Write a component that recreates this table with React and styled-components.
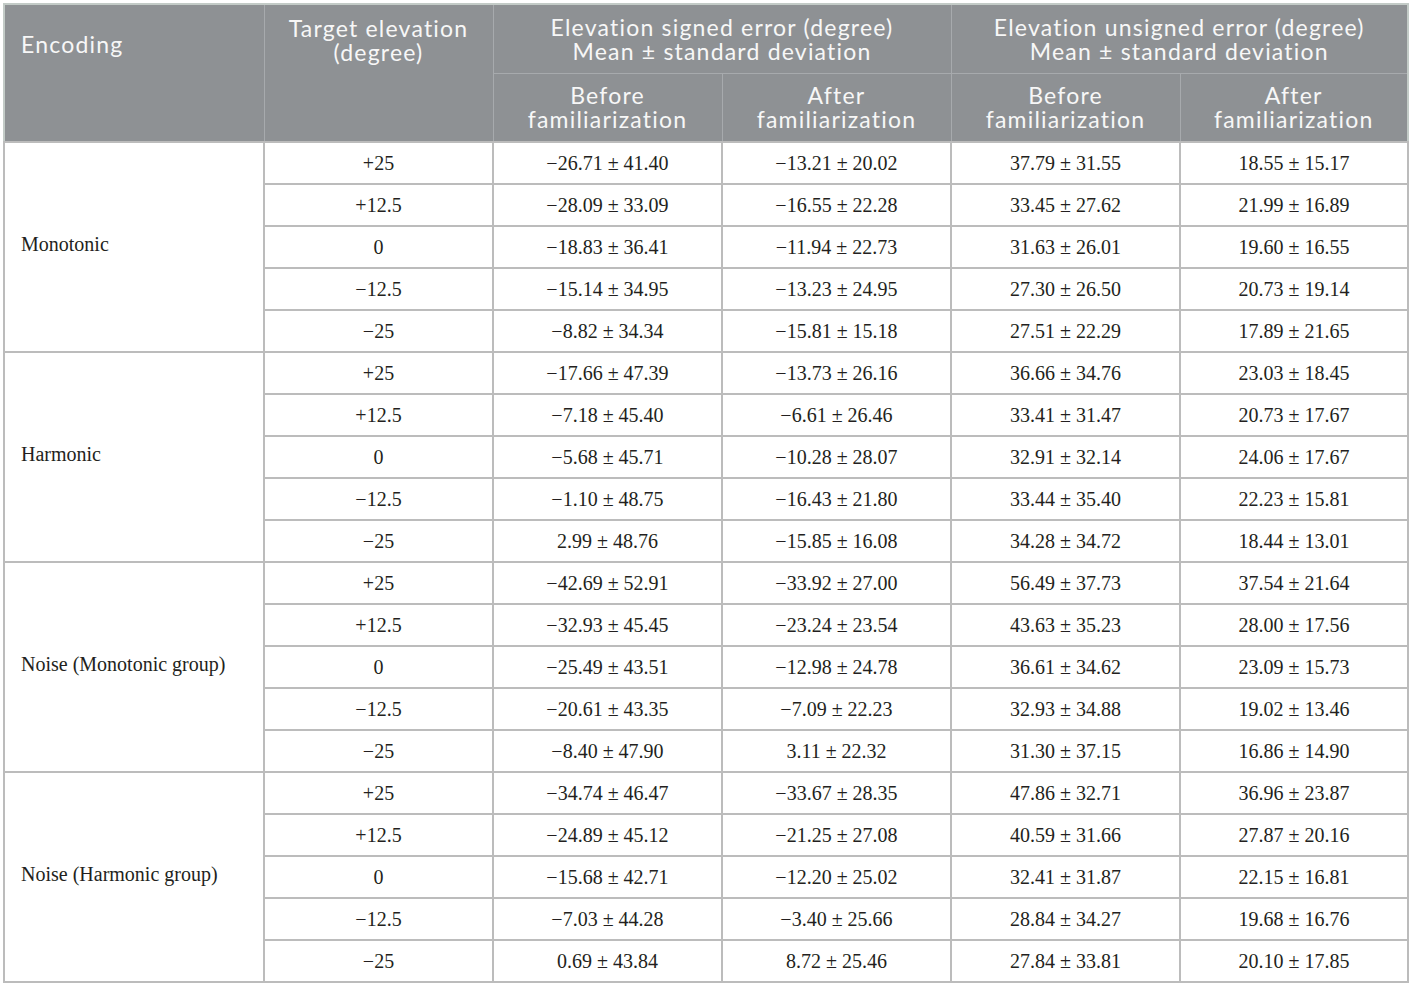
import React from "react";
import styled, { createGlobalStyle } from "styled-components";

const groups = [
  {
    name: "Monotonic",
    rows: [
      ["+25", "−26.71 ± 41.40", "−13.21 ± 20.02", "37.79 ± 31.55", "18.55 ± 15.17"],
      ["+12.5", "−28.09 ± 33.09", "−16.55 ± 22.28", "33.45 ± 27.62", "21.99 ± 16.89"],
      ["0", "−18.83 ± 36.41", "−11.94 ± 22.73", "31.63 ± 26.01", "19.60 ± 16.55"],
      ["−12.5", "−15.14 ± 34.95", "−13.23 ± 24.95", "27.30 ± 26.50", "20.73 ± 19.14"],
      ["−25", "−8.82 ± 34.34", "−15.81 ± 15.18", "27.51 ± 22.29", "17.89 ± 21.65"],
    ],
  },
  {
    name: "Harmonic",
    rows: [
      ["+25", "−17.66 ± 47.39", "−13.73 ± 26.16", "36.66 ± 34.76", "23.03 ± 18.45"],
      ["+12.5", "−7.18 ± 45.40", "−6.61 ± 26.46", "33.41 ± 31.47", "20.73 ± 17.67"],
      ["0", "−5.68 ± 45.71", "−10.28 ± 28.07", "32.91 ± 32.14", "24.06 ± 17.67"],
      ["−12.5", "−1.10 ± 48.75", "−16.43 ± 21.80", "33.44 ± 35.40", "22.23 ± 15.81"],
      ["−25", "2.99 ± 48.76", "−15.85 ± 16.08", "34.28 ± 34.72", "18.44 ± 13.01"],
    ],
  },
  {
    name: "Noise (Monotonic group)",
    rows: [
      ["+25", "−42.69 ± 52.91", "−33.92 ± 27.00", "56.49 ± 37.73", "37.54 ± 21.64"],
      ["+12.5", "−32.93 ± 45.45", "−23.24 ± 23.54", "43.63 ± 35.23", "28.00 ± 17.56"],
      ["0", "−25.49 ± 43.51", "−12.98 ± 24.78", "36.61 ± 34.62", "23.09 ± 15.73"],
      ["−12.5", "−20.61 ± 43.35", "−7.09 ± 22.23", "32.93 ± 34.88", "19.02 ± 13.46"],
      ["−25", "−8.40 ± 47.90", "3.11 ± 22.32", "31.30 ± 37.15", "16.86 ± 14.90"],
    ],
  },
  {
    name: "Noise (Harmonic group)",
    rows: [
      ["+25", "−34.74 ± 46.47", "−33.67 ± 28.35", "47.86 ± 32.71", "36.96 ± 23.87"],
      ["+12.5", "−24.89 ± 45.12", "−21.25 ± 27.08", "40.59 ± 31.66", "27.87 ± 20.16"],
      ["0", "−15.68 ± 42.71", "−12.20 ± 25.02", "32.41 ± 31.87", "22.15 ± 16.81"],
      ["−12.5", "−7.03 ± 44.28", "−3.40 ± 25.66", "28.84 ± 34.27", "19.68 ± 16.76"],
      ["−25", "0.69 ± 43.84", "8.72 ± 25.46", "27.84 ± 33.81", "20.10 ± 17.85"],
    ],
  },
];

const App = () => {
  return (
    <>
      <GlobalStyle />
      <Page>
        <Table>
          <colgroup>
            <col style={{ width: 260 }} />
            <col style={{ width: 229 }} />
            <col style={{ width: 229 }} />
            <col style={{ width: 229 }} />
            <col style={{ width: 229 }} />
            <col style={{ width: 228 }} />
          </colgroup>
          <thead>
            <HeadRow $h={69}>
              <HeadCell rowSpan={2} $align="left" $top={27} $left={16}>
                Encoding
              </HeadCell>
              <HeadCell rowSpan={2} $top={11}>
                Target elevation
                <br />
                (degree)
              </HeadCell>
              <HeadCell colSpan={2}>
                Elevation signed error (degree)
                <br />
                Mean ± standard deviation
              </HeadCell>
              <HeadCell colSpan={2}>
                Elevation unsigned error (degree)
                <br />
                Mean ± standard deviation
              </HeadCell>
            </HeadRow>
            <HeadRow $h={69}>
              <HeadCell>
                Before
                <br />
                familiarization
              </HeadCell>
              <HeadCell>
                After
                <br />
                familiarization
              </HeadCell>
              <HeadCell>
                Before
                <br />
                familiarization
              </HeadCell>
              <HeadCell>
                After
                <br />
                familiarization
              </HeadCell>
            </HeadRow>
          </thead>
          <tbody>
            {groups.map((g) =>
              g.rows.map((r, i) => (
                <BodyRow key={g.name + i}>
                  {i === 0 && <GroupCell rowSpan={5}>{g.name}</GroupCell>}
                  {r.map((v, j) => (
                    <Cell key={j}>{v}</Cell>
                  ))}
                </BodyRow>
              ))
            )}
          </tbody>
        </Table>
      </Page>
    </>
  );
};
export default App;

const GlobalStyle = createGlobalStyle`
  html, body {
    margin: 0;
    padding: 0;
    background: #fff;
  }
`;

const Page = styled.div`
  padding: 3px 0 0 3px;
  width: 1411px;
  box-sizing: border-box;
`;

const Table = styled.table`
  border-collapse: collapse;
  table-layout: fixed;
  width: 1404px;
  border: 2px solid #c3cbc7;
`;

const HeadRow = styled.tr`
  height: ${(p) => p.$h}px;
`;

const BodyRow = styled.tr`
  height: 42px;
`;

const HeadCell = styled.th`
  background: #8e9194;
  color: #f7f7f7;
  font-family: Lato, "Noto Sans", sans-serif;
  font-weight: 400;
  font-size: 23px;
  letter-spacing: 1.2px;
  line-height: 24px;
  white-space: nowrap;
  text-align: ${(p) => p.$align || "center"};
  vertical-align: ${(p) => (p.$top ? "top" : "middle")};
  padding: ${(p) => (p.$top ? `${p.$top}px 4px 0 ${p.$left || 4}px` : "0 4px")};
  border: 1.5px solid #a7aaad;
  border-top-color: #8e9194;
`;

const Cell = styled.td`
  font-family: "Liberation Serif", "Times New Roman", serif;
  font-size: 20px;
  color: #231f20;
  text-align: center;
  vertical-align: middle;
  padding: 0;
  border: 2px solid #bcbcbc;
  white-space: nowrap;
`;

const GroupCell = styled(Cell)`
  text-align: left;
  padding-left: 16px;
  padding-bottom: 5px;
`;
